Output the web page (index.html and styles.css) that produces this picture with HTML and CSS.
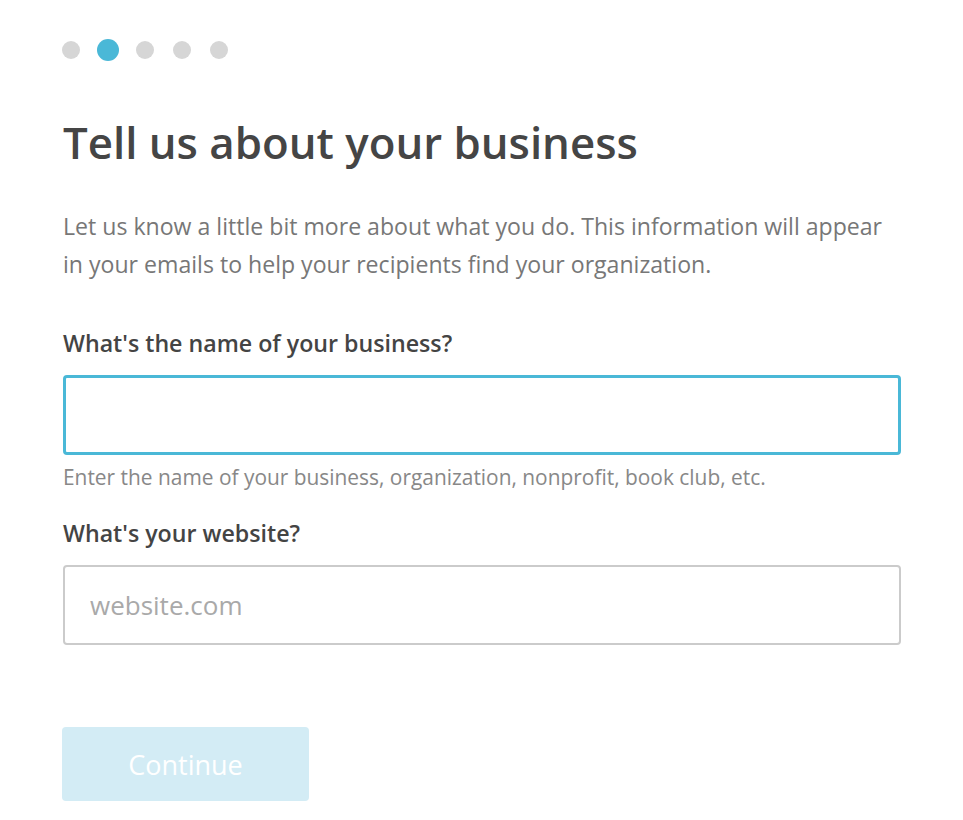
FILE: index.html
```html
<!DOCTYPE html>
<html lang="en">
<head>
<meta charset="utf-8">
<title>Tell us about your business</title>
<link rel="stylesheet" href="styles.css">
</head>
<body>
<main class="page">
  <div class="steps">
    <span class="dot"></span>
    <span class="dot active"></span>
    <span class="dot"></span>
    <span class="dot"></span>
    <span class="dot"></span>
  </div>
  <h1 class="title">Tell us about your business</h1>
  <p class="intro">Let us know a little bit more about what you do. This information will appear in your emails to help your recipients find your organization.</p>
  <form class="form">
    <div class="field">
      <label class="label" for="biz">What's the name of your business?</label>
      <input class="input focused" id="biz" type="text">
      <p class="help">Enter the name of your business, organization, nonprofit, book club, etc.</p>
    </div>
    <div class="field">
      <label class="label" for="web">What's your website?</label>
      <input class="input" id="web" type="text" placeholder="website.com">
    </div>
    <button class="btn" type="button" disabled>Continue</button>
  </form>
</main>
</body>
</html>
```
FILE: styles.css
```css
* { box-sizing: border-box; }
html, body { margin: 0; padding: 0; background: #fff; }
body { font-family: "Open Sans", "Noto Sans", sans-serif; color: #444; }
.page { padding: 39px 62px 0 63px; width: 963px; }
.steps { display: flex; align-items: center; gap: 19px; height: 22px; margin-left: -1px; }
.dot { width: 18px; height: 18px; border-radius: 50%; background: #d6d6d6; }
.dot.active { width: 22px; height: 22px; background: #4ab8d7; margin: 0 -2px; }
.title { margin: 53px 0 0; font-size: 43.8px; font-weight: 600; line-height: 56px; color: #454545; }
.intro { margin: 37px 0 0; font-size: 23.1px; line-height: 38px; color: #777; max-width: 832px; }
.form { display: flex; flex-direction: column; margin-top: 45px; }
.field { display: flex; flex-direction: column; }
.label { font-size: 23.2px; font-weight: 600; line-height: 30px; color: #444; margin-bottom: 17px; }
.input { width: 838px; height: 80px; border: 2px solid #cbcbcb; border-radius: 4px; font-family: inherit; font-size: 26px; padding: 0 25px; color: #444; outline: none; }
.input::placeholder { color: #a9a9a9; }
.input.focused { border: 3px solid #4ab8d7; }
.help { margin: 9px 0 0; font-size: 20.9px; line-height: 26px; color: #888; }
.field + .field { margin-top: 28px; }
.btn { align-self: flex-start; margin-top: 82px; width: 247px; height: 74px; border: 0; border-radius: 4px; background: #d3ecf5; color: #fff; font-family: inherit; font-size: 27px; margin-left: -1px; }
```
